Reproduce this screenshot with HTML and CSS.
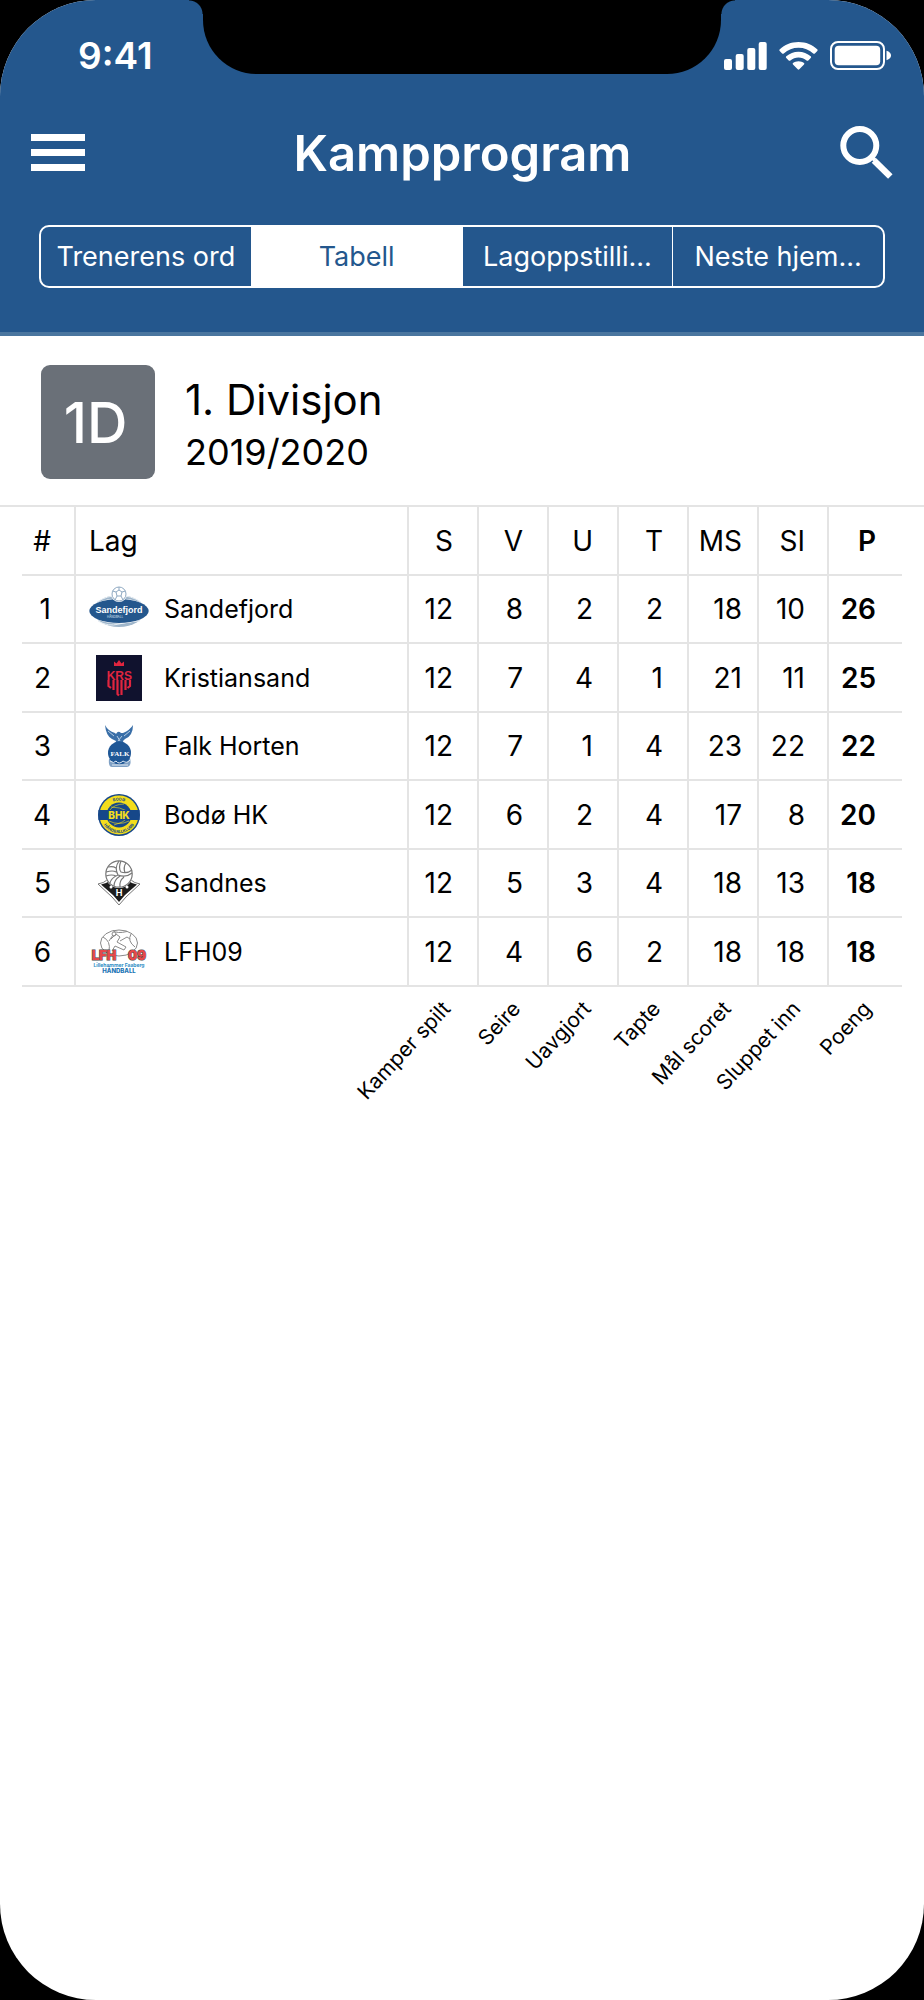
FILE: index.html
```html
<!DOCTYPE html>
<html lang="no">
<head>
  <meta charset="UTF-8" />
  <meta name="viewport" content="width=device-width, initial-scale=1.0"/>
  <title>Kampprogram</title>
  <link rel="stylesheet" href="styles.css">
</head>
<body>

  <div class="phone">
    <header class="header">
      <div class="notch"></div>
      <div class="status-bar">
        <span class="time">9:41</span>
        <div class="status-icons">
          <svg width="43" height="28" viewBox="0 0 43 28" fill="#fff">
            <rect x="0" y="17" width="8" height="11" rx="2"/>
            <rect x="11.7" y="12" width="8" height="16" rx="2"/>
            <rect x="23.3" y="6" width="8" height="22" rx="2"/>
            <rect x="34.7" y="0" width="8" height="28" rx="2"/>
          </svg>
          <svg width="39" height="28" viewBox="0 0 39 28" fill="#fff">
            <path d="M19.500 0C27 0 33.500 2.800 38.200 7.300C38.800 7.900 38.800 8.400 38.300 9L35.900 11.400C35.300 12 34.800 12 34.200 11.400C30.200 7.800 25 5.800 19.500 5.800S8.800 7.800 4.800 11.400C4.200 12 3.700 12 3.100 11.400L.700 9C.200 8.400.200 7.900.800 7.300C5.500 2.800 12 0 19.500 0Z"/>
            <path d="M19.500 9.700C24.200 9.700 28.400 11.400 31.700 14.300C32.300 14.900 32.300 15.400 31.700 16L29.300 18.400C28.700 18.900 28.200 18.900 27.600 18.400C25.300 16.500 22.500 15.500 19.500 15.500S13.700 16.500 11.400 18.400C10.800 18.900 10.300 18.900 9.700 18.400L7.300 16C6.700 15.400 6.700 14.900 7.300 14.300C10.600 11.400 14.800 9.700 19.500 9.700Z"/>
            <path d="M19.500 19.200C21.600 19.200 23.500 19.900 25 21.100C25.500 21.600 25.500 22.100 25 22.600L20.300 27.300C19.800 27.800 19.200 27.800 18.700 27.300L14 22.600C13.500 22.100 13.500 21.600 14 21.100C15.500 19.900 17.400 19.200 19.500 19.200Z"/>
          </svg>
          <svg width="62" height="29" viewBox="0 0 62 29">
            <rect x="1" y="1" width="53" height="27" rx="7" fill="none" stroke="#fff" stroke-width="2"/>
            <rect x="4.7" y="4.700" width="45.500" height="19.500" rx="4" fill="#fff"/>
            <path d="M56.500 9.800C59.600 10.700 61 12.500 61 14.500S59.600 18.300 56.500 19.200Z" fill="#fff"/>
          </svg>
        </div>
      </div>

      <div class="nav-bar">
        <button class="icon-button" aria-label="Meny">
          <svg width="54" height="38" viewBox="0 0 54 38" fill="#fff">
            <path d="M0 0H54V7H0ZM0 15H54V22H0ZM0 30H54V37H0Z"/>
          </svg>
        </button>
        <h1>Kampprogram</h1>
        <button class="icon-button" aria-label="Søk">
          <svg width="53" height="53" viewBox="0 0 53 53" fill="none" stroke="#fff">
            <circle cx="19.800" cy="19.500" r="16.500" stroke-width="6"/>
            <path d="M31 31L35 34" stroke-width="4"/>
            <path d="M34 34.500L50.300 50.500" stroke-width="6.400"/>
          </svg>
        </button>
      </div>

      <nav class="tabs">
        <button class="tab">Trenerens ord</button>
        <button class="tab active">Tabell</button>
        <button class="tab">Lagoppstilli...</button>
        <button class="tab">Neste hjem...</button>
      </nav>
    </header>

    <section class="division">
      <div class="badge">1D</div>
      <div class="division-text">
        <h2>1. Divisjon</h2>
        <p>2019/2020</p>
      </div>
    </section>

    <div class="table-wrap">
      <table>
        <colgroup>
          <col class="col-pos">
          <col>
          <col class="col-num" span="6">
          <col class="col-points">
        </colgroup>
        <thead>
          <tr><th>#</th><th class="team">Lag</th><th>S</th><th>V</th><th>U</th><th>T</th><th class="ms">MS</th><th class="si">SI</th><th class="points">P</th></tr>
        </thead>
        <tbody>
          <tr>
            <td>1</td>
            <td class="team">
              <div class="team-cell">
                <svg class="logo" width="60" height="46" viewBox="0 0 60 46">
                  <ellipse cx="30" cy="25" rx="25.500" ry="16" fill="#9fb6cb"/>
                  <path d="M8 16Q18 9.500 30 9.500T52 16M9 35Q19 41 30 38T51 35" fill="none" stroke="#e6edf3"/>
                  <ellipse cx="30" cy="25" rx="30" ry="12.500" fill="#fff"/>
                  <ellipse cx="30" cy="25" rx="29.700" ry="12" fill="#24578d"/>
                  <circle cx="30" cy="8" r="8" fill="#fff"/>
                  <g fill="none" stroke="#8fa9c2" stroke-width="1">
                    <circle cx="30" cy="8" r="7"/>
                    <path d="M27 6L30 4L33 6L32 10H28ZM30 4V1M33 6L36.500 5M32 10L34 14M28 10L26 14M27 6L23.500 5"/>
                  </g>
                  <text x="30" y="27" class="sandefjord-name">Sandefjord</text>
                  <text x="26" y="32" class="sandefjord-sub">HÅNDBALL</text>
                </svg>
                <span>Sandefjord</span>
              </div>
            </td>
            <td>12</td><td>8</td><td>2</td><td>2</td><td class="ms">18</td><td class="si">10</td><td class="points">26</td>
          </tr>
          <tr>
            <td>2</td>
            <td class="team">
              <div class="team-cell">
                <svg class="logo" width="60" height="46" viewBox="0 0 60 46">
                  <rect x="7" y="0" width="46" height="46" fill="#10122e"/>
                  <path d="M25 6.500L27.500 8.500L30 5L32.500 8.500L35 6.500V11H25Z" fill="#e0253f"/>
                  <path d="M19.500 25V31L22 33M24.500 25V35M28.500 25V39L30 40.500M32.500 25V40M36.500 25V35M41 25V31L38.500 33" fill="none" stroke="#e0253f" stroke-width="2.200"/>
                  <text x="30.300" y="24.500" class="krs-name">KRS</text>
                </svg>
                <span>Kristiansand</span>
              </div>
            </td>
            <td>12</td><td>7</td><td>4</td><td>1</td><td class="ms">21</td><td class="si">11</td><td class="points">25</td>
          </tr>
          <tr>
            <td>3</td>
            <td class="team">
              <div class="team-cell">
                <svg class="logo" width="60" height="46" viewBox="0 0 60 46">
                  <path d="M16 2Q19 8 26 10L27 11Q29 7 32 10L34 10Q41 7 44 2Q44 13 36 16L34 18L35 22H26L27 18L23 16Q17 13 16 2Z" fill="#3a6fa8"/>
                  <path d="M19 8L25 13M41 8L35 13M28 13L31 18M33 13L29 18" stroke="#b4cbe2" fill="none"/>
                  <path d="M20 36Q19 45 24 44H38Q43 43 41 35Z" fill="#7fa0c4"/>
                  <circle cx="30.500" cy="30" r="11.500" fill="#1f5796"/>
                  <path d="M21 38Q25 41 27 38Q30 42 34 38Q38 41 41 37M23 42H39" stroke="#dfe9f3" fill="none"/>
                  <text x="31" y="32.500" class="falk-name">FALK</text>
                </svg>
                <span>Falk Horten</span>
              </div>
            </td>
            <td>12</td><td>7</td><td>1</td><td>4</td><td class="ms">23</td><td class="si">22</td><td class="points">22</td>
          </tr>
          <tr>
            <td>4</td>
            <td class="team">
              <div class="team-cell">
                <svg class="logo" width="60" height="46" viewBox="0 0 60 46">
                  <defs>
                    <path id="bhk-top" d="M15.500 23A14.500 14.500 0 0 1 44.500 23"/>
                    <path id="bhk-bottom" d="M12 23A18 18 0 0 0 48 23"/>
                  </defs>
                  <circle cx="30" cy="23" r="21" fill="#164789"/>
                  <circle cx="30" cy="23" r="19.500" fill="#f3dd1c"/>
                  <circle cx="30" cy="23" r="12.500" fill="#164789"/>
                  <path d="M20 19Q25 12 35 12M20 29Q30 34 40 29M25 33Q34 31 40 25M22 15Q31 15 38 19" fill="none" stroke="#f3dd1c" stroke-width=".6"/>
                  <rect x="9.500" y="18" width="41" height="10" fill="#164789"/>
                  <text class="bhk-ring"><textPath href="#bhk-top" startOffset="50%">BODØ</textPath></text>
                  <text class="bhk-ring"><textPath href="#bhk-bottom" startOffset="50%">HÅNDBALLKLUBB</textPath></text>
                  <text x="30" y="26.500" class="bhk-name">BHK</text>
                </svg>
                <span>Bodø HK</span>
              </div>
            </td>
            <td>12</td><td>6</td><td>2</td><td>4</td><td class="ms">17</td><td class="si">8</td><td class="points">20</td>
          </tr>
          <tr>
            <td>5</td>
            <td class="team">
              <div class="team-cell">
                <svg class="logo" width="60" height="46" viewBox="0 0 60 46">
                  <path d="M9 24Q15 23 18 20H42Q45 23 51 24L37 37L30 45L23 37Z" fill="#fff" stroke="#777"/>
                  <path d="M12 24.500Q17 24 20 21H40Q43 24 48 24.500L36 35L30 42L24 35Z" fill="#1c1c1c"/>
                  <circle cx="30" cy="14" r="14" fill="#fff"/>
                  <g fill="#fff" stroke="#777" stroke-width="1.200">
                    <circle cx="30" cy="14" r="13.200"/>
                    <path d="M30 1Q25 8 29 15Q37 18 43 13M32 1Q29 8 32 12Q38 14 43 10M37 3Q34 7 36 13M29 15Q22 18 21 23M31 16Q25 20 25 26M35 17Q30 21 31 27M17 12Q24 10 27 12M19 7Q24 6 27 8M17 16Q23 14 27 16" fill="none"/>
                  </g>
                  <text x="30" y="36" class="sandnes-mark">H</text>
                  <circle cx="22" cy="27" r="1.500" fill="#fff"/>
                  <circle cx="38" cy="27" r="1.500" fill="#fff"/>
                </svg>
                <span>Sandnes</span>
              </div>
            </td>
            <td>12</td><td>5</td><td>3</td><td>4</td><td class="ms">18</td><td class="si">13</td><td class="points">18</td>
          </tr>
          <tr>
            <td>6</td>
            <td class="team">
              <div class="team-cell">
                <svg class="logo" width="60" height="46" viewBox="0 0 60 46">
                  <g fill="none" stroke="#8a8a8a">
                    <ellipse cx="30" cy="14" rx="18.500" ry="13"/>
                    <path d="M14 8Q22 12 20 22M24 1.500Q28 5 38 2.500M42 5Q38 12 46 18M22 10L27 5L31 8L28 13L37 18L35 21L26 17L23 22M31 12L38 8L41 10M24 6L20 12"/>
                    <circle cx="25" cy="5" r="2"/>
                  </g>
                  <text x="15" y="31" class="lfh-name">LFH</text>
                  <text x="48" y="31" class="lfh-name">09</text>
                  <text x="30" y="38" class="lfh-place">Lillehammer Faaberg</text>
                  <text x="30" y="44" class="lfh-sport">HÅNDBALL</text>
                </svg>
                <span>LFH09</span>
              </div>
            </td>
            <td>12</td><td>4</td><td>6</td><td>2</td><td class="ms">18</td><td class="si">18</td><td class="points">18</td>
          </tr>
        </tbody>
      </table>

      <div class="legend">
        <span class="legend-item">Kamper spilt</span>
        <span class="legend-item">Seire</span>
        <span class="legend-item">Uavgjort</span>
        <span class="legend-item">Tapte</span>
        <span class="legend-item">Mål scoret</span>
        <span class="legend-item">Sluppet inn</span>
        <span class="legend-item">Poeng</span>
      </div>
    </div>
  </div>

</body>
</html>
```
FILE: styles.css
```css
* {
  box-sizing: border-box;
}
body {
  margin: 0;
  background: #000;
  color: #000;
  font-family: Inter, "Liberation Sans", sans-serif;
}
h1, h2, p {
  margin: 0;
}
svg {
  display: block;
}
button {
  font-family: inherit;
  border: none;
  background: none;
  padding: 0;
  cursor: pointer;
}
.phone {
  min-height: 100vh;
  background: #fff;
  border-radius: 96px;
  overflow: hidden;
}

/* header */
.header {
  position: relative;
  background: #24578d;
  color: #fff;
  border-bottom: 4px solid #4a769f;
  padding-bottom: 44px;
}
.notch {
  position: absolute;
  top: 0;
  left: 0;
  right: 0;
  width: 56%;
  height: 74px;
  margin: 0 auto;
  background: #000;
  border-radius: 0 0 54px 54px;
}
.notch::before, .notch::after {
  content: "";
  position: absolute;
  top: 0;
  width: 14px;
  height: 14px;
}
.notch::before {
  right: 100%;
  background: radial-gradient(circle at 0 100%, transparent 13px, #000 14px);
}
.notch::after {
  left: 100%;
  background: radial-gradient(circle at 100% 100%, transparent 13px, #000 14px);
}
.status-bar {
  display: flex;
  justify-content: space-between;
  align-items: flex-end;
  height: 78px;
  padding: 0 32px 0 78px;
}
.time {
  font-size: 37px;
  font-weight: 600;
  line-height: 44px;
}
.status-icons {
  display: flex;
  align-items: center;
  gap: 12px;
  padding-bottom: 8px;
}
.nav-bar {
  display: flex;
  justify-content: space-between;
  align-items: center;
  height: 147px;
  padding: 2px 31px 0;
}
h1 {
  padding-top: 3px;
  font-size: 49px;
  font-weight: 600;
  line-height: 60px;
}
.tabs {
  display: flex;
  margin: 0 39px;
  border: 2px solid #fff;
  border-radius: 10px;
  overflow: hidden;
}
.tab {
  flex: 1 1 0;
  height: 59px;
  color: #fff;
  font-size: 27px;
  white-space: nowrap;
}
.tab + .tab {
  border-left: 1px solid #fff;
}
.tab.active {
  background: #fff;
  color: #24578d;
}

/* division */
.division {
  display: flex;
  align-items: center;
  gap: 30px;
  padding: 29px 41px 26px;
  border-bottom: 2px solid #e4e4e4;
}
.division-text {
  padding-top: 8px;
}
.badge {
  width: 114px;
  height: 114px;
  padding-right: 5px;
  border-radius: 9px;
  background: #6a7078;
  color: #fff;
  font-size: 56px;
  font-weight: 500;
  line-height: 116px;
  text-align: center;
}
h2 {
  font-size: 42px;
  font-weight: 400;
  line-height: 53px;
}
.division p {
  font-size: 36px;
  line-height: 53px;
}

/* table */
.table-wrap {
  padding: 0 22px;
}
table {
  width: 100%;
  table-layout: fixed;
  border-collapse: separate;
  border-spacing: 0;
}
.col-pos {
  width: 54px;
}
.col-num {
  width: 70px;
}
.col-points {
  width: 73px;
}
th, td {
  height: 69px;
  padding: 0 24px 0 0;
  border-bottom: 2px solid #e4e4e4;
  border-right: 2px solid #e4e4e4;
  font-size: 28px;
  font-weight: 400;
  text-align: right;
}
tr:nth-child(odd) td {
  height: 68px;
}
th:first-child, td:first-child {
  padding-right: 23px;
}
th:last-child, td:last-child {
  border-right: none;
}
th.team, td.team {
  padding: 0 0 0 13px;
  text-align: left;
}
th.ms, td.ms {
  padding-right: 15px;
}
th.si, td.si {
  padding-right: 22px;
}
th.points, td.points {
  padding-right: 26px;
  font-weight: 600;
}
.team-cell {
  display: flex;
  align-items: center;
  gap: 15px;
  font-size: 25px;
}
.logo {
  flex: none;
}

/* logo lettering */
.logo text {
  text-anchor: middle;
}
.sandefjord-name {
  font-family: "Liberation Sans", sans-serif;
  font-size: 9px;
  font-weight: 700;
  fill: #fff;
}
.sandefjord-sub {
  font-size: 3px;
  fill: #dce6f0;
}
.krs-name {
  font-family: "Liberation Sans", sans-serif;
  font-size: 12px;
  font-weight: 700;
  fill: #e0253f;
}
.falk-name {
  font-family: "Liberation Serif", serif;
  font-size: 7px;
  font-weight: 700;
  fill: #fff;
}
.bhk-name {
  font-size: 10px;
  font-weight: 800;
  fill: #f3dd1c;
}
.bhk-ring {
  font-size: 4px;
  font-weight: 700;
  fill: #164789;
}
.sandnes-mark {
  font-size: 9px;
  font-weight: 700;
  fill: #fff;
}
.lfh-name {
  font-size: 13px;
  font-weight: 900;
  fill: #e5484a;
  stroke: #444;
  stroke-width: 1px;
  paint-order: stroke;
}
.lfh-place {
  font-size: 5px;
  font-weight: 700;
  fill: #2c8cc4;
}
.lfh-sport {
  font-size: 6px;
  font-weight: 800;
  fill: #1b75b5;
}

/* column legend */
.legend {
  display: grid;
  grid-template-columns: repeat(7, 70px);
  justify-content: end;
  padding: 4px 26px 0 0;
}
.legend-item {
  justify-self: end;
  margin-right: 9px;
  font-size: 21px;
  line-height: 28px;
  white-space: nowrap;
  transform: rotate(-47deg);
  transform-origin: 100% 50%;
}
```
